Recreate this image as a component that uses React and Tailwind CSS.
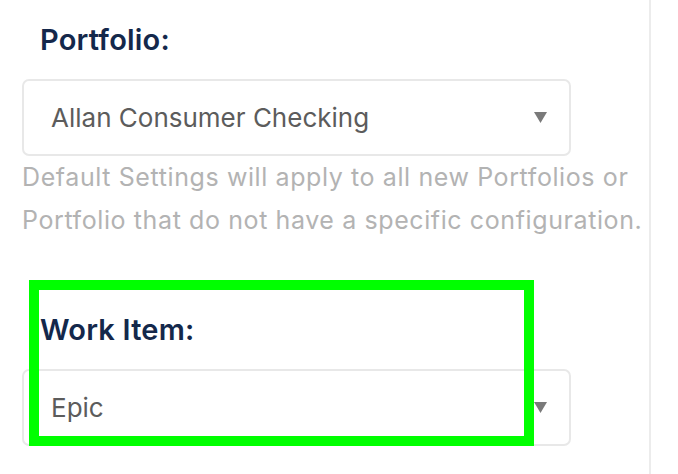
import React from "react";

function Caret() {
  return (
    <svg width="13" height="11" viewBox="0 0 13 11" className="shrink-0">
      <path d="M0 0 H13 L6.5 11 Z" fill="#7a7a7a" />
    </svg>
  );
}

function SelectBox({ value }) {
  return (
    <div className="flex h-[77px] w-[549px] items-center justify-between rounded-[7px] border-2 border-[#e8e8e8] bg-white pl-[27px] pr-[22px]">
      <span className="text-[26px] leading-none text-[#5c5c5c]">{value}</span>
      <Caret />
    </div>
  );
}

export default function App() {
  return (
    <div
      className="relative h-[474px] w-[678px] overflow-hidden bg-white"
      style={{ fontFamily: "Inter, 'Liberation Sans', sans-serif" }}
    >
      <div className="h-full w-[651px] border-r-2 border-[#ececec] pl-[22px] pt-[22px]">
        {/* Portfolio */}
        <div className="pl-[18px] text-[29px] font-semibold leading-[36px] tracking-[0.2px] text-[#14284b]">
          Portfolio:
        </div>
        <div className="mt-[21px]">
          <SelectBox value="Allan Consumer Checking" />
        </div>
        <p className="text-[25px] leading-[43px] tracking-[0.6px] whitespace-nowrap text-[#b3b3b3]">
          Default Settings will apply to all new Portfolios or
          <br />
          Portfolio that do not have a specific configuration.
        </p>

        {/* Work Item */}
        <div className="mt-[70px] pl-[18px] text-[29px] font-semibold leading-[36px] tracking-[0.2px] text-[#14284b]">
          Work Item:
        </div>
        <div className="mt-[21px]">
          <SelectBox value="Epic" />
        </div>
      </div>

      {/* highlight annotation */}
      <div className="pointer-events-none absolute left-[29px] top-[280px] h-[166px] w-[505px] border-[10px] border-[#00ff00]" />
    </div>
  );
}
